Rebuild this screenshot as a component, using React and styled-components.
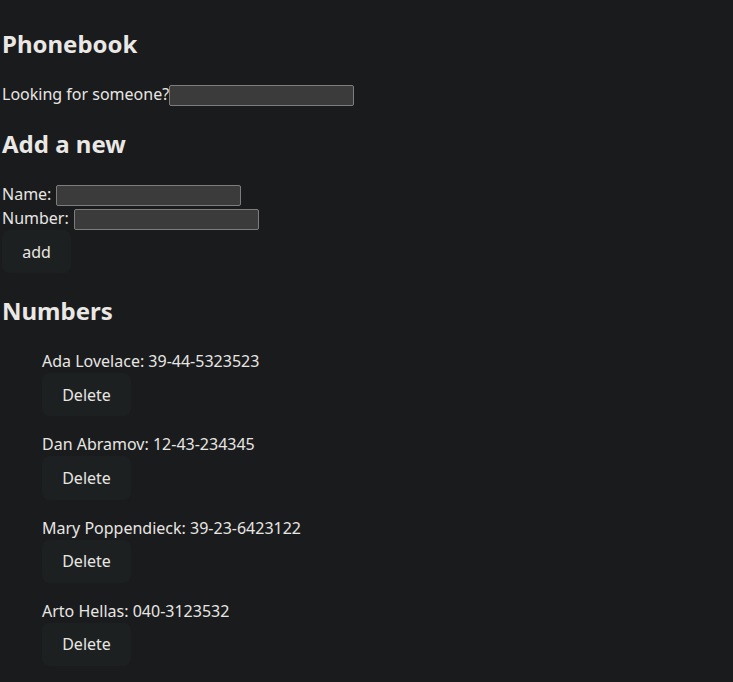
import React from "react";
import styled, { createGlobalStyle } from "styled-components";

const GlobalStyle = createGlobalStyle`
  html, body {
    margin: 0;
    padding: 0;
    background: #1a1b1d;
  }
  body {
    font-family: "Noto Sans", "Open Sans", sans-serif;
    font-size: 16px;
    line-height: 1.5;
    color: #e8e6e3;
  }
`;

const Page = styled.div`
  padding: 6px 0 0 2px;
  display: flow-root;
`;

const Heading = styled.h2`
  font-size: 24px;
  font-weight: 700;
  margin: 20px 0;
  line-height: 36px;
  color: #eae8e5;
`;

const Row = styled.div`
  height: 24px;
  line-height: 24px;
`;

const TextInput = styled.input`
  box-sizing: border-box;
  width: 185px;
  height: 21px;
  margin: 0 0 0 ${(p) => (p.$gap ? "5px" : "0")};
  padding: 1px 2px;
  background: #3b3b3b;
  border: 1px solid #7d7d7d;
  border-radius: 2px;
  color: #e8e6e3;
  font: 13px "Noto Sans", sans-serif;
  vertical-align: baseline;
`;

const Button = styled.button`
  display: block;
  border-radius: 8px;
  border: 1px solid transparent;
  padding: 0.6em 1.2em;
  font-family: "Noto Sans", sans-serif;
  font-size: 16px;
  font-weight: 400;
  line-height: normal;
  background: #1d2021;
  color: #e8e6e3;
  cursor: pointer;
`;

const List = styled.ul`
  margin: 16px 0;
  padding-left: 40px;
  list-style: none;
`;

const Item = styled.li`
  margin: 0 0 16px 0;
`;

const people = [
  { name: "Ada Lovelace", number: "39-44-5323523" },
  { name: "Dan Abramov", number: "12-43-234345" },
  { name: "Mary Poppendieck", number: "39-23-6423122" },
  { name: "Arto Hellas", number: "040-3123532" },
];

export default function App() {
  return (
    <Page>
      <GlobalStyle />
      <Heading>Phonebook</Heading>
      <Row>
        Looking for someone?
        <TextInput />
      </Row>
      <Heading>Add a new</Heading>
      <form onSubmit={(e) => e.preventDefault()}>
        <Row>
          Name:
          <TextInput $gap />
        </Row>
        <Row>
          Number:
          <TextInput $gap />
        </Row>
        <Button type="submit">add</Button>
      </form>
      <Heading>Numbers</Heading>
      <List>
        {people.map((p) => (
          <Item key={p.name}>
            {p.name}: {p.number}
            <Button>Delete</Button>
          </Item>
        ))}
      </List>
    </Page>
  );
}
